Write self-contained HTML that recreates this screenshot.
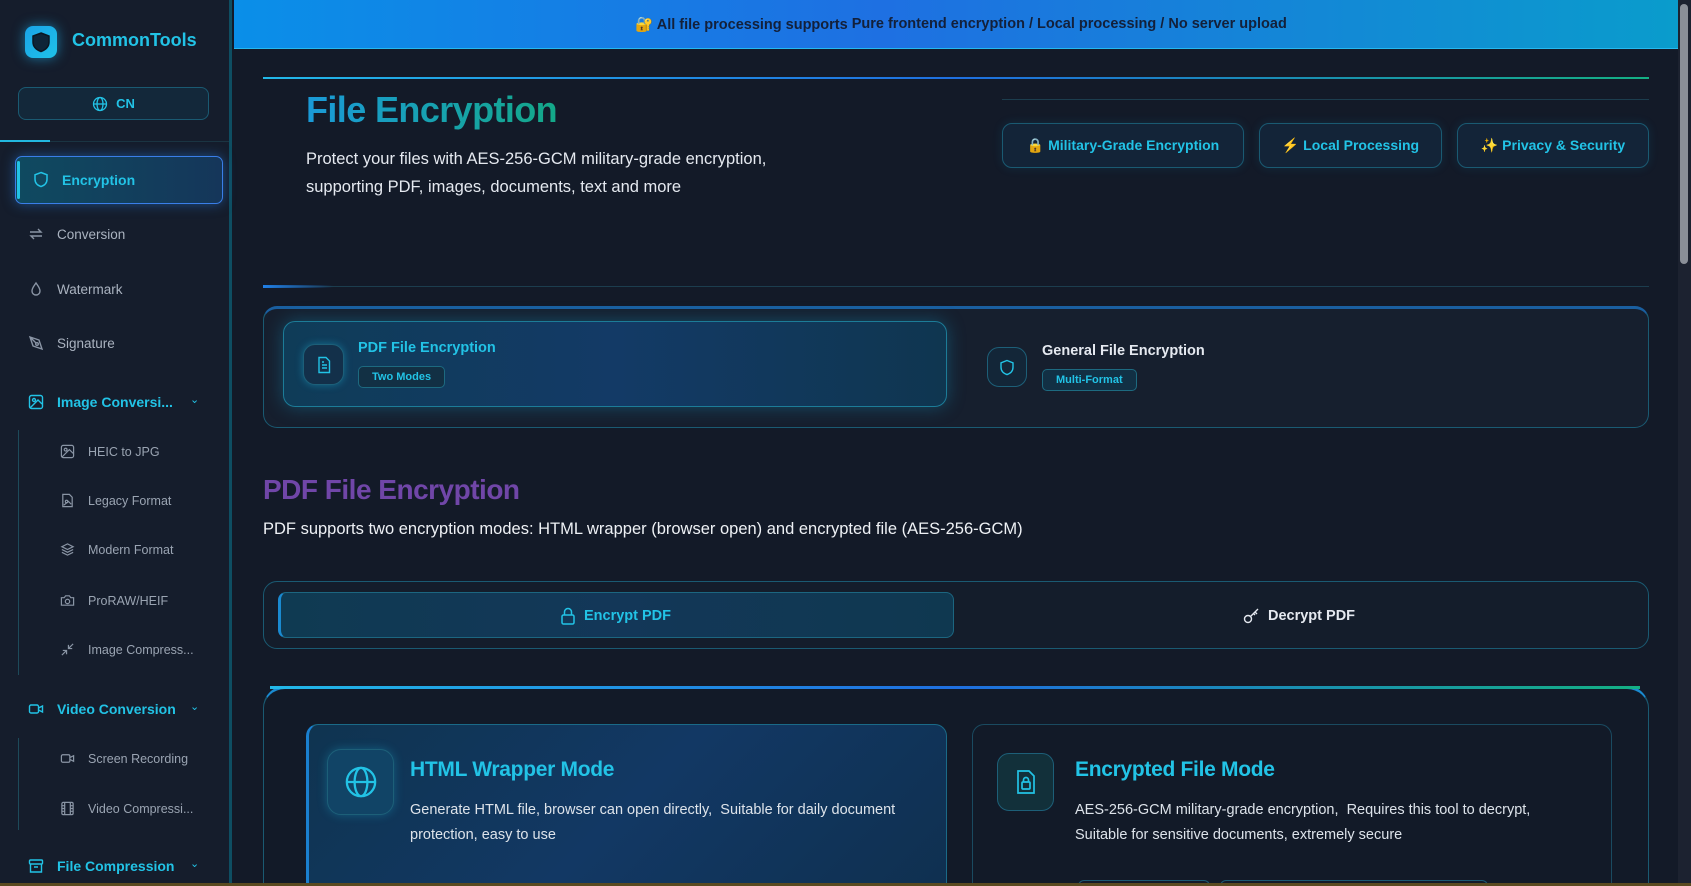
<!DOCTYPE html>
<html style="overflow:hidden;width:1691px;height:886px"><head><meta charset="utf-8"><style>
*{box-sizing:border-box;margin:0;padding:0}
body{width:1691px;height:886px;overflow:hidden;background:#131a28;font-family:"Liberation Sans","Noto Sans CJK SC",sans-serif;position:relative;color:#e5e9f0}
.abs{position:absolute}
.sb{left:0;top:0;width:232px;height:886px;background:#151d2c;border-right:3px solid #0e4e62}
.logo{left:25px;top:26px;width:32px;height:32px;border-radius:8px;background:linear-gradient(135deg,#1aa3e8,#1fc2e8);box-shadow:0 0 12px rgba(30,180,240,.6)}
.brand{left:72px;top:30px;font-size:18px;font-weight:bold;color:#22c3e6}
.cn{left:18px;top:87px;width:191px;height:33px;border:1px solid #1a5a72;border-radius:8px;background:#13283a;color:#22c3e6;font-size:13px;font-weight:bold;display:flex;align-items:center;justify-content:center;gap:8px}
.nav{left:28px;font-size:13.5px;color:#aab3c0;display:flex;align-items:center;gap:13px}
.nav.h{color:#22c3e6;font-weight:bold;font-size:14px}
.sub{left:60px;font-size:12.5px;color:#9aa4b2;display:flex;align-items:center;gap:13px}
svg{flex:none}
.banner{left:234px;top:0;width:1444px;height:49px;background:linear-gradient(90deg,#0a8fe8,#1e70e2 45%,#0a9ccc);border-bottom:1px solid #25b8ef;color:#13203a;font-size:14.5px;font-weight:bold;display:flex;align-items:center;justify-content:center;padding-left:10px}
.scroll{left:1678px;top:0;width:13px;height:886px;background:#1c2230}
.badge{top:123px;height:45px;border:1px solid #1a5a72;border-radius:10px;background:#132438;color:#22c3e6;font-size:14px;font-weight:bold;display:flex;align-items:center;justify-content:center;gap:10px;box-shadow:0 0 10px rgba(20,150,200,.15)}
.card{border:1px solid #1a5a72;border-radius:14px;background:#161f2e}
.tag{border:1px solid #1d6a80;border-radius:5px;background:#123044;color:#22c3e6;font-size:11px;font-weight:bold;padding:4px 13px;display:inline-block}
.ib{border:1px solid #1d5f78;border-radius:12px;background:#13304a;display:flex;align-items:center;justify-content:center}
.chev{position:absolute;left:190px;font-size:11px;color:#22c3e6}
</style></head><body>
<div class="abs sb"></div>
<div class="abs logo"><svg width="32" height="32" viewBox="0 0 32 32"><path d="M16 7l8 3v6c0 5-4 8-8 9.5C12 24 8 21 8 16v-6z" fill="#0e2438" stroke="#0b1622" stroke-width="1.5"/></svg></div>
<div class="abs brand">CommonTools</div>
<div class="abs cn"><svg width="16" height="16" viewBox="0 0 16 16" fill="none" stroke="#22c3e6" stroke-width="1.3"><circle cx="8" cy="8" r="6.5"/><ellipse cx="8" cy="8" rx="3" ry="6.5"/><path d="M1.5 8h13"/></svg>CN</div>
<div class="abs" style="left:0;top:141px;width:229px;height:1px;background:#1b3442"></div>
<div class="abs" style="left:0;top:140px;width:50px;height:2px;background:#22b8e0"></div>
<div class="abs" style="left:15px;top:156px;width:208px;height:48px;border:1.5px solid #3a7ee8;border-radius:7px;background:linear-gradient(90deg,#0f4a60,#15365a);box-shadow:0 0 12px rgba(40,130,230,.5)"></div>
<div class="abs" style="left:17px;top:161px;width:3px;height:38px;background:#22c3e6;border-radius:2px"></div>
<div class="abs nav h" style="top:171px;left:33px"><svg width="16" height="17" viewBox="0 0 16 17" fill="none" stroke="#22c3e6" stroke-width="1.5"><path d="M8 1.5l6 2.3v4.5c0 4-3 6.3-6 7.3-3-1-6-3.3-6-7.3V3.8z"/></svg><span style="font-size:14px">Encryption</span></div>
<div class="abs nav" style="top:226px"><svg width="16" height="16" viewBox="0 0 16 16" fill="none" stroke="#8a95a5" stroke-width="1.4"><path d="M2 6h11l-3-3M14 10H3l3 3"/></svg>Conversion</div>
<div class="abs nav" style="top:281px"><svg width="16" height="16" viewBox="0 0 16 16" fill="none" stroke="#8a95a5" stroke-width="1.4"><path d="M8 2c2 3 4 5 4 8a4 4 0 01-8 0c0-3 2-5 4-8z"/></svg>Watermark</div>
<div class="abs nav" style="top:335px"><svg width="16" height="16" viewBox="0 0 16 16" fill="none" stroke="#8a95a5" stroke-width="1.4"><path d="M2 2l9 3 3 9-9-3zM2 2l6 6"/><circle cx="9" cy="9" r="1.3"/></svg>Signature</div>
<div class="abs nav h" style="top:394px"><svg width="16" height="16" viewBox="0 0 16 16" fill="none" stroke="#22c3e6" stroke-width="1.4"><rect x="1.5" y="1.5" width="13" height="13" rx="2"/><circle cx="6" cy="6" r="1.5"/><path d="M14 10l-4-4-8 8"/></svg>Image Conversi...</div>
<div class="chev" style="top:393px">&#8964;</div>
<div class="abs" style="left:18px;top:430px;width:1px;height:245px;background:#1d4a5a"></div>
<div class="abs sub" style="top:444px"><svg width="15" height="15" viewBox="0 0 16 16" fill="none" stroke="#8a95a5" stroke-width="1.3"><rect x="1.5" y="1.5" width="13" height="13" rx="2"/><circle cx="6" cy="6" r="1.5"/><path d="M14 10l-4-4-8 8"/></svg>HEIC to JPG</div>
<div class="abs sub" style="top:493px"><svg width="15" height="15" viewBox="0 0 16 16" fill="none" stroke="#8a95a5" stroke-width="1.3"><path d="M3 1.5h7l3 3v10H3z"/><circle cx="7" cy="9" r="1.3"/><path d="M4 13l5-4 3 3"/></svg>Legacy Format</div>
<div class="abs sub" style="top:542px"><svg width="15" height="15" viewBox="0 0 16 16" fill="none" stroke="#8a95a5" stroke-width="1.3"><path d="M8 2l6 3-6 3-6-3zM2 8l6 3 6-3M2 11l6 3 6-3"/></svg>Modern Format</div>
<div class="abs sub" style="top:593px"><svg width="15" height="15" viewBox="0 0 16 16" fill="none" stroke="#8a95a5" stroke-width="1.3"><path d="M1.5 5h3l1.5-2h4l1.5 2h3v8h-13z"/><circle cx="8" cy="9" r="2.3"/></svg>ProRAW/HEIF</div>
<div class="abs sub" style="top:642px"><svg width="15" height="15" viewBox="0 0 16 16" fill="none" stroke="#8a95a5" stroke-width="1.3"><path d="M14 2l-5 5M9 3v4h4M2 14l5-5M3 9h4v4"/></svg>Image Compress...</div>
<div class="abs nav h" style="top:701px"><svg width="16" height="16" viewBox="0 0 16 16" fill="none" stroke="#22c3e6" stroke-width="1.4"><rect x="1.5" y="4" width="9" height="8" rx="1.5"/><path d="M10.5 7l4-2v6l-4-2"/></svg>Video Conversion</div>
<div class="chev" style="top:700px">&#8964;</div>
<div class="abs" style="left:18px;top:738px;width:1px;height:92px;background:#1d4a5a"></div>
<div class="abs sub" style="top:751px"><svg width="15" height="15" viewBox="0 0 16 16" fill="none" stroke="#8a95a5" stroke-width="1.3"><rect x="1.5" y="4" width="9" height="8" rx="1.5"/><path d="M10.5 7l4-2v6l-4-2"/></svg>Screen Recording</div>
<div class="abs sub" style="top:801px"><svg width="15" height="15" viewBox="0 0 16 16" fill="none" stroke="#8a95a5" stroke-width="1.3"><rect x="2" y="1.5" width="12" height="13" rx="1.5"/><path d="M5 1.5v13M11 1.5v13M2 5h3M2 8h3M2 11h3M11 5h3M11 8h3M11 11h3"/></svg>Video Compressi...</div>
<div class="abs nav h" style="top:858px"><svg width="16" height="16" viewBox="0 0 16 16" fill="none" stroke="#22c3e6" stroke-width="1.4"><rect x="1.5" y="2" width="13" height="4" rx="1"/><path d="M2.5 6v8h11V6M6 9h4"/></svg>File Compression</div>
<div class="chev" style="top:857px">&#8964;</div>

<div class="abs banner">🔐 All file processing supports&nbsp; <span style="font-weight:bold">Pure frontend encryption / Local processing / No server upload</span></div>
<div class="abs scroll"><div style="margin:4px 2px;width:8px;height:260px;background:#8a8f98;border-radius:4px"></div></div>

<div class="abs" style="left:263px;top:77px;width:1386px;height:2px;background:linear-gradient(90deg,#22b8e8,#1f6fe0 50%,#14b084)"></div>
<div class="abs" style="left:306px;top:89px;font-size:36px;font-weight:bold;background:linear-gradient(90deg,#1a9ad8,#14a888);-webkit-background-clip:text;color:transparent;letter-spacing:-0.6px">File Encryption</div>
<div class="abs" style="left:306px;top:145px;font-size:16.5px;line-height:28px;color:#e5e9f0">Protect your files with AES-256-GCM military-grade encryption,<br>supporting PDF, images, documents, text and more</div>
<div class="abs" style="left:1002px;top:99px;width:647px;height:1px;background:#1c3d4e"></div>
<div class="abs badge" style="left:1002px;width:242px">🔒 Military-Grade Encryption</div>
<div class="abs badge" style="left:1259px;width:183px">⚡ Local Processing</div>
<div class="abs badge" style="left:1457px;width:192px">✨ Privacy &amp; Security</div>
<div class="abs" style="left:263px;top:286px;width:1386px;height:1px;background:#1c3d4e"></div>
<div class="abs" style="left:263px;top:285px;width:70px;height:3px;background:linear-gradient(90deg,#2080e8,transparent)"></div>

<div class="abs card" style="left:263px;top:306px;width:1386px;height:122px;border-top:3px solid #1a5fa0"></div>
<div class="abs" style="left:283px;top:321px;width:664px;height:86px;border:1.5px solid #1c7c98;border-radius:12px;background:linear-gradient(90deg,#0f3c58,#133a66 50%,#0f3650);box-shadow:0 0 18px rgba(20,160,210,.35)"></div>
<div class="abs ib" style="left:303px;top:344px;width:41px;height:41px;box-shadow:0 0 8px rgba(30,190,230,.4)"><svg width="16" height="18" viewBox="0 0 16 18" fill="none" stroke="#22c3e6" stroke-width="1.4"><path d="M3 1.5h7l3.5 3.5v11.5H3z"/><path d="M6 9h5M6 12h5M6 6h2"/></svg></div>
<div class="abs" style="left:358px;top:340px;font-size:14.5px;font-weight:bold;color:#22c3e6">PDF File Encryption</div>
<div class="abs tag" style="left:358px;top:366px">Two Modes</div>
<div class="abs ib" style="left:987px;top:347px;width:40px;height:40px;background:#132638"><svg width="16" height="17" viewBox="0 0 16 17" fill="none" stroke="#22c3e6" stroke-width="1.4"><path d="M8 1.5l6 2.3v4.5c0 4-3 6.3-6 7.3-3-1-6-3.3-6-7.3V3.8z"/></svg></div>
<div class="abs" style="left:1042px;top:343px;font-size:14.5px;font-weight:bold;color:#e5e9f0">General File Encryption</div>
<div class="abs tag" style="left:1042px;top:369px">Multi-Format</div>

<div class="abs" style="left:263px;top:474px;font-size:28px;font-weight:bold;color:#7046a8;letter-spacing:-0.5px">PDF File Encryption</div>
<div class="abs" style="left:263px;top:520px;font-size:16.5px;color:#eef1f5">PDF supports two encryption modes: HTML wrapper (browser open) and encrypted file (AES-256-GCM)</div>

<div class="abs card" style="left:263px;top:581px;width:1386px;height:68px;background:#141d2b"></div>
<div class="abs" style="left:278px;top:592px;width:676px;height:46px;border:1px solid #1c6680;border-radius:8px;background:linear-gradient(90deg,#0f3a52,#133758 50%,#0f3850);border-left:3px solid #1a8ad0"></div>
<div class="abs" style="left:560px;top:607px;font-size:14.5px;font-weight:bold;color:#22c3e6;display:flex;align-items:center;gap:8px"><svg width="16" height="18" viewBox="0 0 16 18" fill="none" stroke="#22c3e6" stroke-width="1.5"><rect x="2" y="8" width="12" height="9" rx="1.5"/><path d="M4.5 8V5a3.5 3.5 0 017 0v3"/></svg>Encrypt PDF</div>
<div class="abs" style="left:1243px;top:607px;font-size:14.5px;font-weight:bold;color:#e5e9f0;display:flex;align-items:center;gap:8px"><svg width="17" height="17" viewBox="0 0 17 17" fill="none" stroke="#e5e9f0" stroke-width="1.4"><circle cx="5" cy="12" r="3.5"/><path d="M7.5 9.5L15 2M12 5l2 2M10.5 6.5l1.5 1.5"/></svg>Decrypt PDF</div>

<div class="abs card" style="left:263px;top:686px;width:1386px;height:200px;background:#121a28;border-top:3px solid #1a8ad0;border-bottom:none;border-radius:22px 22px 0 0"></div>
<div class="abs" style="left:270px;top:686px;width:1370px;height:3px;background:linear-gradient(90deg,#22b8e8,#1f6fe0 50%,#14b084)"></div>
<div class="abs" style="left:306px;top:724px;width:641px;height:162px;border:1.5px solid #1a6a88;border-bottom:none;border-radius:12px 12px 0 0;background:linear-gradient(135deg,#0f3450,#123864 50%,#0f3050);border-left:3px solid #1a80d0"></div>
<div class="abs ib" style="left:327px;top:749px;width:67px;height:66px;border-radius:14px;background:#114466;box-shadow:0 0 10px rgba(30,190,230,.3)"><svg width="34" height="34" viewBox="0 0 24 24" fill="none" stroke="#22c3e6" stroke-width="1.6"><circle cx="12" cy="12" r="10"/><ellipse cx="12" cy="12" rx="4.5" ry="10"/><path d="M2 12h20"/></svg></div>
<div class="abs" style="left:410px;top:758px;font-size:21px;font-weight:bold;color:#22c3e6;letter-spacing:-0.3px">HTML Wrapper Mode</div>
<div class="abs" style="left:410px;top:798px;font-size:14.5px;line-height:25px;color:#dde3ea">Generate HTML file, browser can open directly,&nbsp; Suitable for daily document<br>protection, easy to use</div>
<div class="abs" style="left:972px;top:724px;width:640px;height:162px;border:1px solid #1a4a60;border-bottom:none;border-radius:12px 12px 0 0;background:#121a28"></div>
<div class="abs ib" style="left:997px;top:753px;width:57px;height:58px;background:#12303a"><svg width="22" height="26" viewBox="0 0 22 26" fill="none" stroke="#22c3e6" stroke-width="1.7"><path d="M3 2h11l5 5v17H3z"/><rect x="7" y="13" width="8" height="7" rx="1"/><path d="M8.5 13v-2a2.5 2.5 0 015 0v2"/></svg></div>
<div class="abs" style="left:1075px;top:758px;font-size:21px;font-weight:bold;color:#22c3e6;letter-spacing:-0.3px">Encrypted File Mode</div>
<div class="abs" style="left:1075px;top:798px;font-size:14.5px;line-height:25px;color:#dde3ea">AES-256-GCM military-grade encryption,&nbsp; Requires this tool to decrypt,<br>Suitable for sensitive documents, extremely secure</div>
<div class="abs" style="left:1078px;top:880px;width:132px;height:6px;border:1px solid #1a5a72;border-bottom:none;border-radius:6px 6px 0 0"></div>
<div class="abs" style="left:1220px;top:880px;width:268px;height:6px;border:1px solid #1a5a72;border-bottom:none;border-radius:6px 6px 0 0"></div>
<div class="abs" style="left:0;top:883px;width:1691px;height:3px;background:#5a4a20"></div>
</body></html>
